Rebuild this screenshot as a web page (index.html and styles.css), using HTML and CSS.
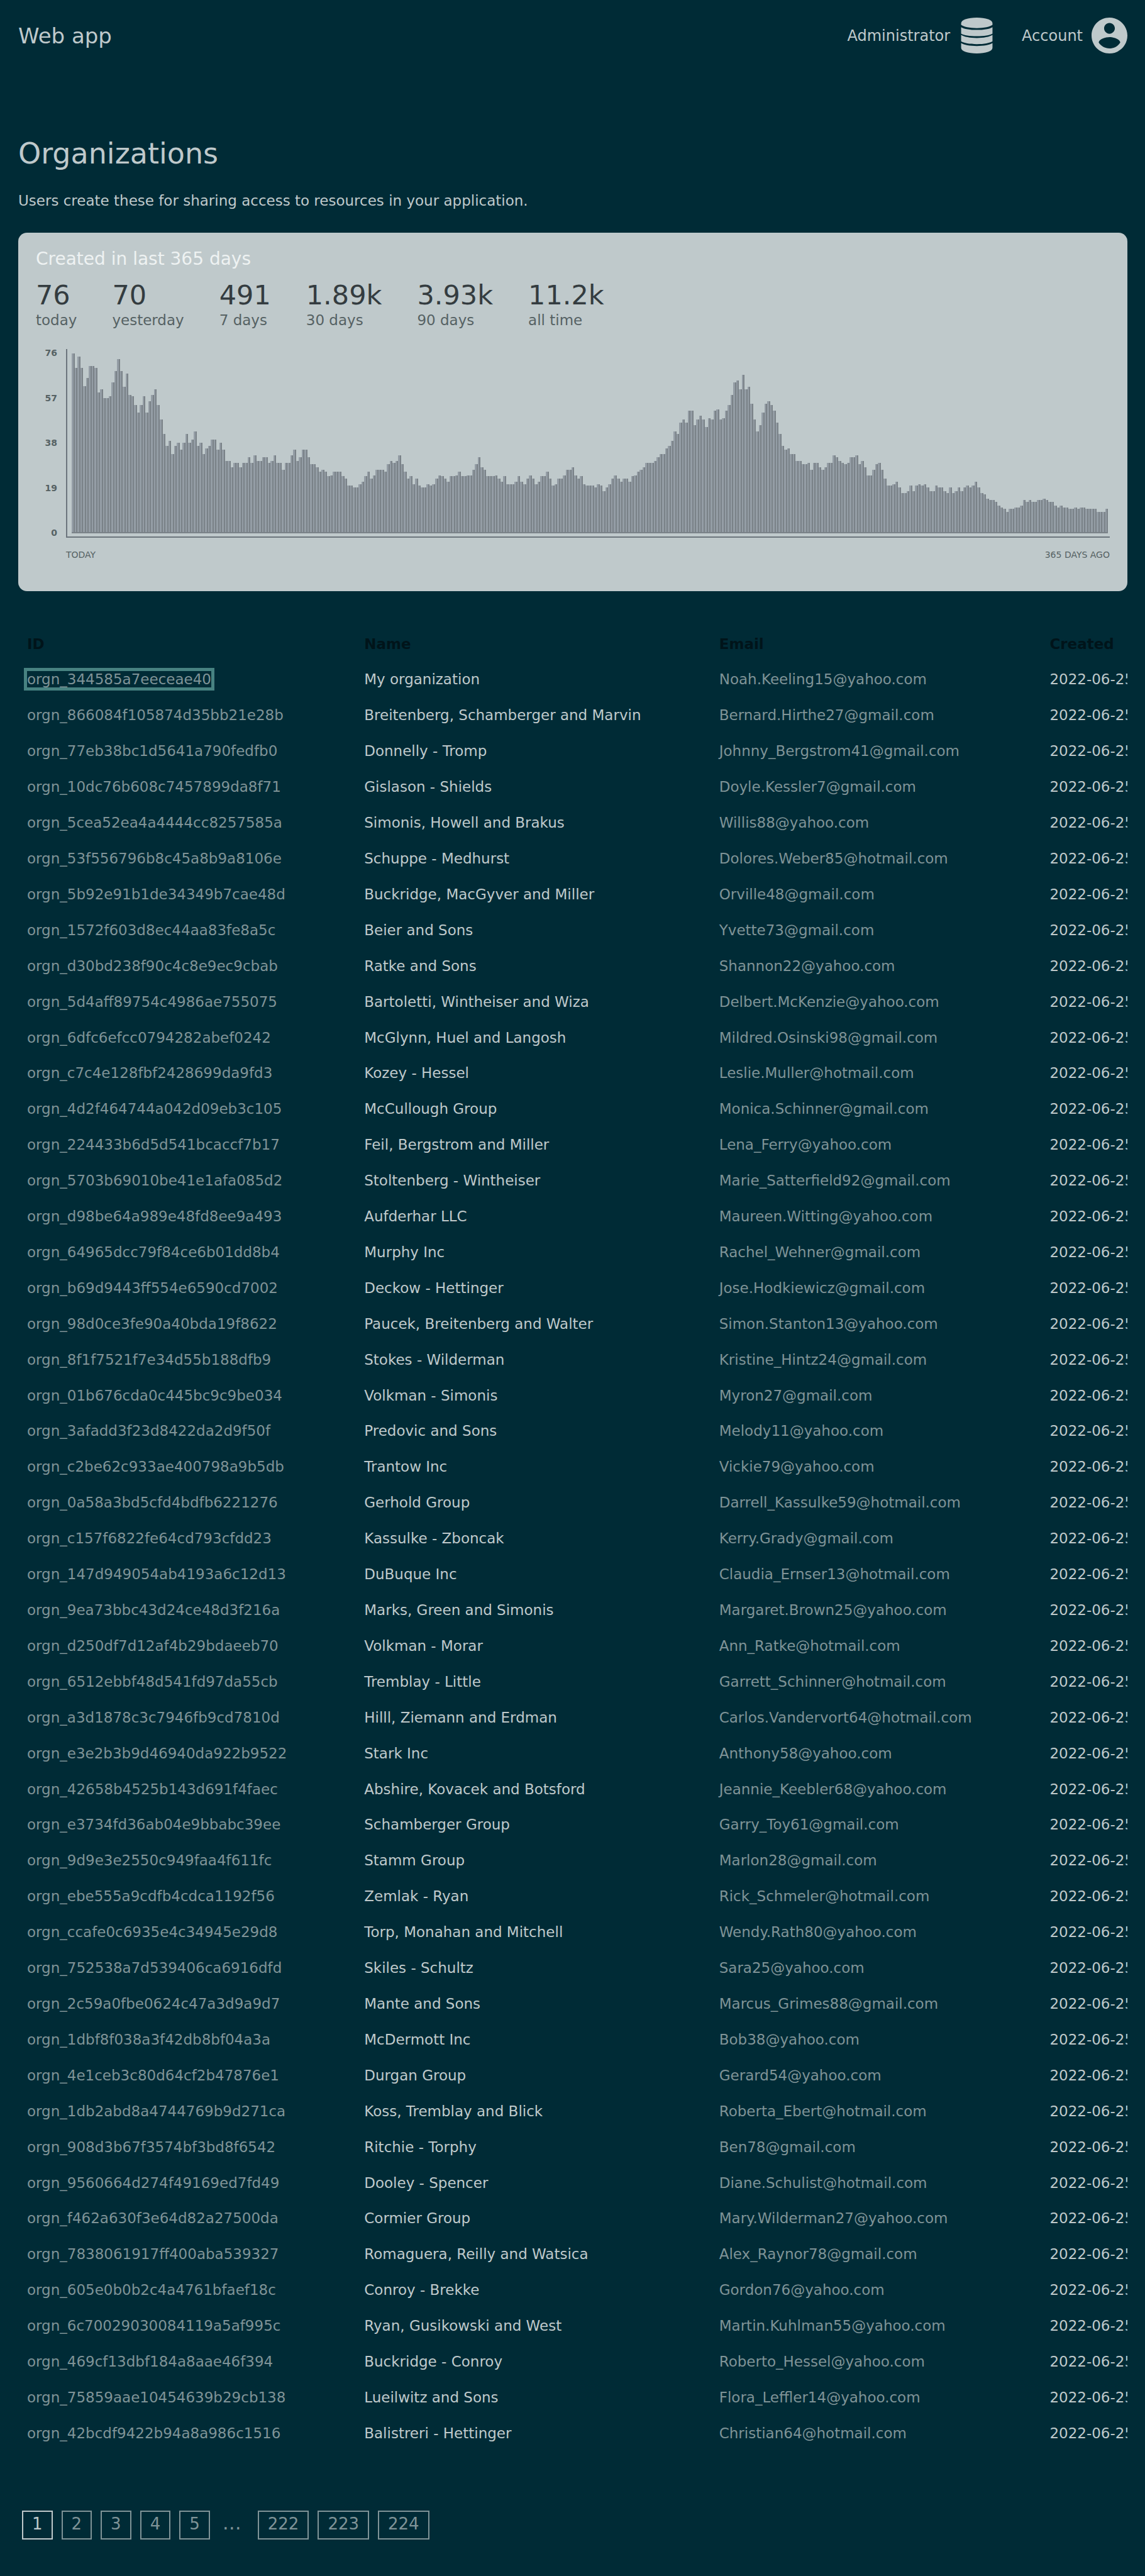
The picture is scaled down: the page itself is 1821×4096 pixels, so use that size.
FILE: index.html
```html
<!DOCTYPE html>
<html lang="en">
<head>
<meta charset="utf-8">
<meta name="viewport" content="width=device-width, initial-scale=1">
<title>Organizations</title>
<link rel="stylesheet" href="styles.css">
</head>
<body>
<header class="topbar">
  <a class="brand" href="#">Web app</a>
  <nav class="menus">
    <a class="menu" href="#">Administrator
      <svg class="menu-icon" viewBox="-4 0 64 64" aria-hidden="true">
        <path d="M0 10C0 4 12 0 28 0S56 4 56 10v3C52 16.500 41 18.700 28 18.700S4 16.500 0 13z"/>
        <path d="M0 17C5 20.300 16 22 28 22s23-1.700 28-5v11.500C51 31.500 41 33 28 33S5 31.500 0 28.500z"/>
        <path d="M0 31C5 34.500 16 36.500 28 36.500s23-2 28-5.500v11.500C51 45.500 41 47.500 28 47.500S5 45.500 0 42.500z"/>
        <path d="M0 45.500C5 49 16 50.700 28 50.700s23-1.700 28-5.200V54c0 6-12 10-28 10S0 60 0 54z"/>
      </svg>
    </a>
    <a class="menu" href="#">Account
      <svg class="menu-icon" viewBox="2 2 20 20" aria-hidden="true">
        <path d="M12 2C6.480 2 2 6.480 2 12s4.480 10 10 10 10-4.480 10-10S17.520 2 12 2zm0 3c1.660 0 3 1.340 3 3s-1.340 3-3 3-3-1.340-3-3 1.340-3 3-3zm0 14.200c-2.500 0-4.710-1.280-6-3.220.03-1.990 4-3.080 6-3.080 1.990 0 5.970 1.090 6 3.080-1.290 1.940-3.500 3.220-6 3.220z"/>
      </svg>
    </a>
  </nav>
</header>
<main class="content">
  <h1 class="title">Organizations</h1>
  <p class="intro">Users create these for sharing access to resources in your application.</p>

  <section class="card">
    <h2 class="card-title">Created in last 365 days</h2>
    <ul class="stats">
      <li><span class="stat-value">76</span><span class="stat-label">today</span></li>
      <li><span class="stat-value">70</span><span class="stat-label">yesterday</span></li>
      <li><span class="stat-value">491</span><span class="stat-label">7 days</span></li>
      <li><span class="stat-value">1.89k</span><span class="stat-label">30 days</span></li>
      <li><span class="stat-value">3.93k</span><span class="stat-label">90 days</span></li>
      <li><span class="stat-value">11.2k</span><span class="stat-label">all time</span></li>
    </ul>
    <div class="chart">
      <div class="y-axis"><span>76</span><span>57</span><span>38</span><span>19</span><span>0</span></div>
      <div class="plot" id="plot"></div>
      <div class="x-axis"><span>TODAY</span><span>365 DAYS AGO</span></div>
    </div>
  </section>

  <div class="table-wrap">
    <table class="orgs">
      <colgroup><col class="col-id"><col class="col-name"><col class="col-email"><col></colgroup>
      <thead><tr><th>ID</th><th>Name</th><th>Email</th><th>Created</th></tr></thead>
      <tbody id="rows"></tbody>
    </table>
  </div>

  <nav class="pages" aria-label="Pages">
    <a class="page current" href="#" aria-current="page">1</a>
    <a class="page" href="#">2</a>
    <a class="page" href="#">3</a>
    <a class="page" href="#">4</a>
    <a class="page" href="#">5</a>
    <span class="more">…</span>
    <a class="page" href="#">222</a>
    <a class="page" href="#">223</a>
    <a class="page" href="#">224</a>
  </nav>
</main>
<script src="app.js"></script>
</body>
</html>
```

FILE: styles.css
```css
* { box-sizing: border-box; }

body {
  margin: 0;
  background: #002b36;
  color: #bfc9cb;
  font-family: "DejaVu Sans", sans-serif;
  font-size: 23px;
  line-height: 28px;
}

a { color: inherit; text-decoration: none; }
h1, h2, p, ul { margin: 0; padding: 0; font-weight: normal; }

.topbar {
  display: flex;
  justify-content: space-between;
  align-items: center;
  padding: 28px 28px 28px 29px;
}
.brand { font-size: 34px; line-height: 40px; }
.menus { display: flex; gap: 43px; }
.menu { display: flex; align-items: center; gap: 14px; font-size: 24px; }
.menu-icon { width: 57px; height: 57px; fill: currentColor; }

.content { padding: 104px 28px 57px 29px; }
.title { font-size: 46px; line-height: 54px; margin-bottom: 34px; }
.intro { margin-bottom: 37px; }

.card {
  padding: 25px 28px 50px;
  border-radius: 14px;
  background: #bfc9cb;
  color: #566264;
}
.card-title { font-size: 28px; line-height: 34px; margin-bottom: 14px; color: #eef2f2; }
.stats { display: flex; gap: 56px; list-style: none; margin-bottom: 30px; }
.stat-value { display: block; font-size: 43px; line-height: 52px; color: #343c40; }
.stat-label { display: block; }

.chart {
  display: grid;
  grid-template-columns: 34px 1fr;
  column-gap: 14px;
  row-gap: 19px;
  font-size: 14px;
  line-height: 16px;
}
.y-axis {
  display: flex;
  flex-direction: column;
  justify-content: space-between;
  align-items: flex-end;
  font-weight: bold;
}
.plot {
  display: flex;
  align-items: flex-end;
  height: 300px;
  margin-top: 2px;
  padding: 7px 5px 5px 7px;
  border-left: 2px solid #6c757d;
  border-bottom: 2px solid #6c757d;
}
.bar {
  flex: 1;
  background: #949da5;
  border-right: 2px solid #7a8288;
  border-bottom: 2px solid #7a8288;
}
.x-axis { grid-column: 2; display: flex; justify-content: space-between; }

.table-wrap { margin-top: 55px; overflow: hidden; }
.orgs {
  width: 100%;
  height: 2903px;
  table-layout: fixed;
  border-collapse: collapse;
}
.orgs th, .orgs td {
  padding: 0 0 0 14px;
  text-align: left;
  white-space: nowrap;
}
.orgs th { height: 57px; color: #00141a; }
.col-id { width: 30.4%; }
.col-name { width: 32%; }
.col-email { width: 29.8%; }
.org-id, .org-email { color: #7f9397; }
.org-id a.selected { outline: 5px solid #478281; }

.pages {
  display: flex;
  align-items: baseline;
  gap: 14px;
  margin-top: 94px;
  padding-left: 6px;
  font-size: 26px;
  line-height: 31px;
  color: #7f9397;
}
.page { padding: 4px 14px 7px; border: 2px solid #7f9397; }
.page.current { color: #bfc9cb; border-color: #bfc9cb; }
.more { padding: 0 12px 0 6px; font-size: 30px; }
```

FILE: app.js
```js
// Bar heights, newest day first, where 161 is the full scale.
const heights = [
  161, 148, 158, 148, 132, 139, 150, 150, 148, 126, 129, 121, 121, 123, 135, 145, 156, 145, 131, 143,
  124, 123, 115, 108, 115, 123, 108, 118, 124, 129, 115, 102, 89, 78, 83, 71, 78, 81, 75, 81,
  89, 81, 84, 91, 78, 81, 71, 76, 78, 84, 84, 75, 81, 75, 65, 65, 59, 63, 63, 59,
  63, 63, 68, 63, 70, 65, 65, 68, 68, 63, 65, 70, 63, 63, 57, 63, 63, 70, 75, 65,
  68, 75, 75, 68, 62, 62, 59, 55, 57, 55, 51, 52, 55, 55, 55, 51, 49, 43, 43, 41,
  41, 44, 46, 51, 55, 49, 52, 57, 57, 57, 55, 62, 65, 63, 65, 70, 62, 55, 49, 51,
  44, 49, 43, 41, 41, 44, 43, 44, 49, 52, 51, 49, 46, 51, 51, 52, 55, 51, 51, 52,
  52, 57, 62, 68, 59, 57, 51, 51, 51, 52, 49, 46, 51, 44, 44, 44, 46, 51, 46, 44,
  49, 52, 49, 44, 46, 51, 51, 55, 49, 43, 44, 49, 49, 52, 57, 57, 59, 52, 49, 51,
  44, 43, 43, 43, 41, 44, 43, 38, 41, 44, 49, 52, 49, 46, 49, 49, 46, 51, 52, 55,
  57, 59, 63, 63, 63, 65, 68, 71, 71, 76, 78, 83, 91, 89, 99, 102, 99, 110, 110, 97,
  102, 105, 102, 95, 103, 102, 110, 111, 102, 103, 110, 115, 124, 135, 137, 129, 142, 129, 131, 116,
  102, 91, 97, 108, 116, 118, 115, 110, 99, 89, 78, 75, 76, 71, 71, 65, 65, 62, 62, 63,
  57, 63, 63, 59, 57, 59, 63, 63, 70, 68, 65, 63, 62, 63, 68, 68, 70, 62, 65, 59,
  52, 52, 57, 62, 63, 57, 49, 43, 43, 44, 46, 41, 36, 36, 38, 43, 38, 43, 44, 43,
  44, 41, 38, 38, 43, 41, 41, 38, 36, 41, 36, 38, 41, 38, 41, 43, 41, 43, 46, 41,
  36, 35, 31, 30, 30, 28, 25, 23, 22, 19, 22, 22, 23, 23, 25, 30, 28, 30, 28, 28,
  30, 30, 31, 30, 28, 28, 25, 23, 25, 23, 23, 22, 22, 23, 22, 23, 23, 22, 22, 22,
  22, 19, 19, 19, 22
];

const plot = document.getElementById('plot');
for (const height of heights) {
  const bar = document.createElement('div');
  bar.className = 'bar';
  bar.style.height = `${height / 161 * 100}%`;
  plot.append(bar);
}

const organizations = `
344585a7eeceae40|My organization|Noah.Keeling15@yahoo.com
866084f105874d35bb21e28b|Breitenberg, Schamberger and Marvin|Bernard.Hirthe27@gmail.com
77eb38bc1d5641a790fedfb0|Donnelly - Tromp|Johnny_Bergstrom41@gmail.com
10dc76b608c7457899da8f71|Gislason - Shields|Doyle.Kessler7@gmail.com
5cea52ea4a4444cc8257585a|Simonis, Howell and Brakus|Willis88@yahoo.com
53f556796b8c45a8b9a8106e|Schuppe - Medhurst|Dolores.Weber85@hotmail.com
5b92e91b1de34349b7cae48d|Buckridge, MacGyver and Miller|Orville48@gmail.com
1572f603d8ec44aa83fe8a5c|Beier and Sons|Yvette73@gmail.com
d30bd238f90c4c8e9ec9cbab|Ratke and Sons|Shannon22@yahoo.com
5d4aff89754c4986ae755075|Bartoletti, Wintheiser and Wiza|Delbert.McKenzie@yahoo.com
6dfc6efcc0794282abef0242|McGlynn, Huel and Langosh|Mildred.Osinski98@gmail.com
c7c4e128fbf2428699da9fd3|Kozey - Hessel|Leslie.Muller@hotmail.com
4d2f464744a042d09eb3c105|McCullough Group|Monica.Schinner@gmail.com
224433b6d5d541bcaccf7b17|Feil, Bergstrom and Miller|Lena_Ferry@yahoo.com
5703b69010be41e1afa085d2|Stoltenberg - Wintheiser|Marie_Satterfield92@gmail.com
d98be64a989e48fd8ee9a493|Aufderhar LLC|Maureen.Witting@yahoo.com
64965dcc79f84ce6b01dd8b4|Murphy Inc|Rachel_Wehner@gmail.com
b69d9443ff554e6590cd7002|Deckow - Hettinger|Jose.Hodkiewicz@gmail.com
98d0ce3fe90a40bda19f8622|Paucek, Breitenberg and Walter|Simon.Stanton13@yahoo.com
8f1f7521f7e34d55b188dfb9|Stokes - Wilderman|Kristine_Hintz24@gmail.com
01b676cda0c445bc9c9be034|Volkman - Simonis|Myron27@gmail.com
3afadd3f23d8422da2d9f50f|Predovic and Sons|Melody11@yahoo.com
c2be62c933ae400798a9b5db|Trantow Inc|Vickie79@yahoo.com
0a58a3bd5cfd4bdfb6221276|Gerhold Group|Darrell_Kassulke59@hotmail.com
c157f6822fe64cd793cfdd23|Kassulke - Zboncak|Kerry.Grady@gmail.com
147d949054ab4193a6c12d13|DuBuque Inc|Claudia_Ernser13@hotmail.com
9ea73bbc43d24ce48d3f216a|Marks, Green and Simonis|Margaret.Brown25@yahoo.com
d250df7d12af4b29bdaeeb70|Volkman - Morar|Ann_Ratke@hotmail.com
6512ebbf48d541fd97da55cb|Tremblay - Little|Garrett_Schinner@hotmail.com
a3d1878c3c7946fb9cd7810d|Hilll, Ziemann and Erdman|Carlos.Vandervort64@hotmail.com
e3e2b3b9d46940da922b9522|Stark Inc|Anthony58@yahoo.com
42658b4525b143d691f4faec|Abshire, Kovacek and Botsford|Jeannie_Keebler68@yahoo.com
e3734fd36ab04e9bbabc39ee|Schamberger Group|Garry_Toy61@gmail.com
9d9e3e2550c949faa4f611fc|Stamm Group|Marlon28@gmail.com
ebe555a9cdfb4cdca1192f56|Zemlak - Ryan|Rick_Schmeler@hotmail.com
ccafe0c6935e4c34945e29d8|Torp, Monahan and Mitchell|Wendy.Rath80@yahoo.com
752538a7d539406ca6916dfd|Skiles - Schultz|Sara25@yahoo.com
2c59a0fbe0624c47a3d9a9d7|Mante and Sons|Marcus_Grimes88@gmail.com
1dbf8f038a3f42db8bf04a3a|McDermott Inc|Bob38@yahoo.com
4e1ceb3c80d64cf2b47876e1|Durgan Group|Gerard54@yahoo.com
1db2abd8a4744769b9d271ca|Koss, Tremblay and Blick|Roberta_Ebert@hotmail.com
908d3b67f3574bf3bd8f6542|Ritchie - Torphy|Ben78@gmail.com
9560664d274f49169ed7fd49|Dooley - Spencer|Diane.Schulist@hotmail.com
f462a630f3e64d82a27500da|Cormier Group|Mary.Wilderman27@yahoo.com
7838061917ff400aba539327|Romaguera, Reilly and Watsica|Alex_Raynor78@gmail.com
605e0b0b2c4a4761bfaef18c|Conroy - Brekke|Gordon76@yahoo.com
6c70029030084119a5af995c|Ryan, Gusikowski and West|Martin.Kuhlman55@yahoo.com
469cf13dbf184a8aae46f394|Buckridge - Conroy|Roberto_Hessel@yahoo.com
75859aae10454639b29cb138|Lueilwitz and Sons|Flora_Leffler14@yahoo.com
42bcdf9422b94a8a986c1516|Balistreri - Hettinger|Christian64@hotmail.com
`.trim().split('\n');

document.getElementById('rows').innerHTML = organizations.map((line, index) => {
  const [id, name, email] = line.split('|');
  const selected = index === 0 ? ' class="selected"' : '';
  return `<tr>
    <td class="org-id"><a href="#"${selected}>orgn_${id}</a></td>
    <td>${name}</td>
    <td class="org-email">${email}</td>
    <td>2022-06-25</td>
  </tr>`;
}).join('');
```
